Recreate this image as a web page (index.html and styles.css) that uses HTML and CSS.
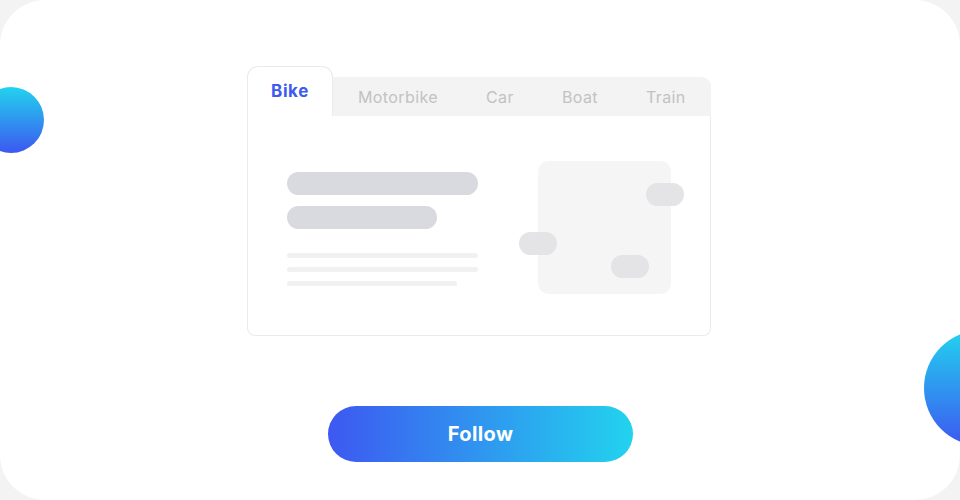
FILE: index.html
```html
<!DOCTYPE html>
<html lang="en">
<head>
<meta charset="utf-8">
<title>Tabs</title>
<link rel="stylesheet" href="styles.css">
</head>
<body>
<div class="card">
  <span class="blob blob-left"></span>
  <span class="blob blob-right"></span>

  <div class="tabs">
    <div class="tab-row">
      <div class="tab tab-active">Bike</div>
      <div class="tab-strip">
        <div class="tab">Motorbike</div>
        <div class="tab">Car</div>
        <div class="tab">Boat</div>
        <div class="tab">Train</div>
      </div>
    </div>
    <div class="panel">
      <div class="text-col">
        <div class="bar bar-long"></div>
        <div class="bar bar-short"></div>
        <div class="lines">
          <div class="line"></div>
          <div class="line"></div>
          <div class="line line-short"></div>
        </div>
      </div>
      <div class="media">
        <span class="pill pill-a"></span>
        <span class="pill pill-b"></span>
        <span class="pill pill-c"></span>
      </div>
    </div>
  </div>

  <button class="follow">Follow</button>
</div>
</body>
</html>
```

FILE: styles.css
```css
* { box-sizing: border-box; }

html, body {
  margin: 0;
  padding: 0;
  background: #f3f3f3;
}

body {
  font-family: Inter, "Noto Sans", "Liberation Sans", sans-serif;
}

.card {
  position: relative;
  width: 960px;
  height: 500px;
  padding-right: 2px;
  background: #ffffff;
  border-radius: 45px;
  overflow: hidden;
  display: flex;
  flex-direction: column;
  align-items: center;
}

.blob {
  position: absolute;
  border-radius: 50%;
  background: linear-gradient(180deg, #22d3ee 0%, #3c58f1 100%);
}

.blob-left {
  width: 66px;
  height: 66px;
  left: -22px;
  top: 87px;
}

.blob-right {
  width: 116px;
  height: 116px;
  left: 924px;
  top: 330px;
}

.tabs {
  margin-top: 66px;
  width: 464px;
}

.tab-row {
  display: flex;
  align-items: flex-end;
  height: 50px;
}

.tab {
  font-size: 16px;
  letter-spacing: 0.4px;
  color: #c2c2c2;
  padding: 0 24px;
  line-height: 40px;
  white-space: nowrap;
}

.tab-active {
  width: 86px;
  height: 50px;
  padding: 0;
  text-align: center;
  line-height: 49px;
  font-size: 17px;
  letter-spacing: 0.6px;
  font-weight: 700;
  color: #3d5af1;
  background: #fff;
  border: 1px solid #eaeaea;
  border-bottom: none;
  border-radius: 11px 11px 0 0;
}

.tab-strip {
  flex: 1;
  height: 39px;
  display: flex;
  padding-left: 1px;
  background: #f3f3f3;
  border-radius: 0 9px 0 0;
}

.panel {
  height: 220px;
  border: 1px solid #eaeaea;
  border-top: none;
  border-radius: 0 0 8px 8px;
  display: flex;
  justify-content: space-between;
  align-items: flex-start;
  padding: 45px 39px 0 39px;
}

.text-col {
  margin-top: 11px;
  width: 191px;
  display: flex;
  flex-direction: column;
}

.bar {
  height: 23px;
  border-radius: 12px;
  background: #d9dadf;
}

.bar-long { width: 191px; }
.bar-short { width: 150px; margin-top: 11px; }

.lines {
  margin-top: 24px;
  display: flex;
  flex-direction: column;
  gap: 9px;
}

.line {
  height: 5px;
  width: 191px;
  border-radius: 3px;
  background: #f1f1f2;
}

.line-short { width: 170px; }

.media {
  position: relative;
  width: 133px;
  height: 133px;
  border-radius: 11px;
  background: #f5f5f5;
}

.pill {
  position: absolute;
  width: 38px;
  height: 23px;
  border-radius: 12px;
  background: #e4e4e6;
}

.pill-a { left: 108px; top: 22px; }
.pill-b { left: -19px; top: 71px; }
.pill-c { left: 73px; top: 94px; }

.follow {
  margin-top: 70px;
  margin-left: 3px;
  width: 305px;
  height: 56px;
  border: none;
  border-radius: 28px;
  background: linear-gradient(90deg, #3d58f1 0%, #22d3ee 100%);
  color: #fff;
  font-family: inherit;
  font-size: 20px;
  font-weight: 700;
  letter-spacing: 0.4px;
  cursor: pointer;
}
```
